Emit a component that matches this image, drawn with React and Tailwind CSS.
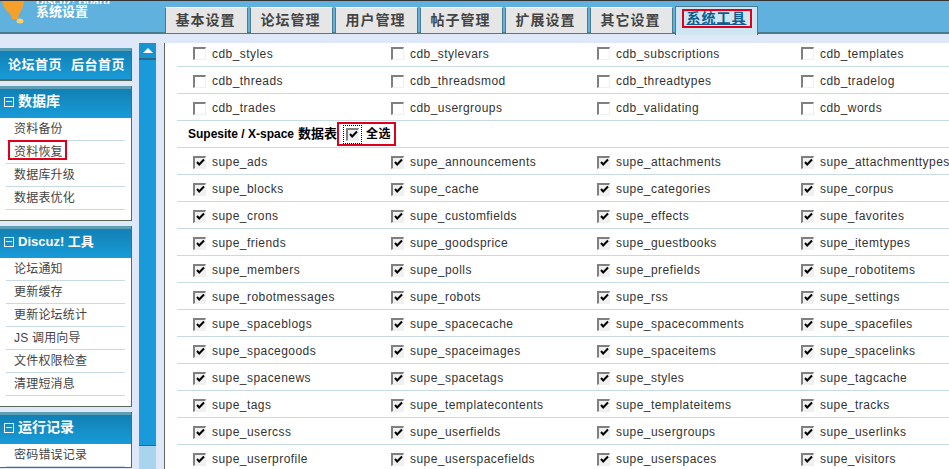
const font = { fontFamily: '"Liberation Sans","Noto Sans CJK SC",sans-serif' }

const TABS = ['基本设置', '论坛管理', '用户管理', '帖子管理', '扩展设置', '其它设置']

const CDB_ROWS = [
  ['cdb_styles', 'cdb_stylevars', 'cdb_subscriptions', 'cdb_templates'],
  ['cdb_threads', 'cdb_threadsmod', 'cdb_threadtypes', 'cdb_tradelog'],
  ['cdb_trades', 'cdb_usergroups', 'cdb_validating', 'cdb_words'],
]

const SUPE_ROWS = [
  ['supe_ads', 'supe_announcements', 'supe_attachments', 'supe_attachmenttypes'],
  ['supe_blocks', 'supe_cache', 'supe_categories', 'supe_corpus'],
  ['supe_crons', 'supe_customfields', 'supe_effects', 'supe_favorites'],
  ['supe_friends', 'supe_goodsprice', 'supe_guestbooks', 'supe_itemtypes'],
  ['supe_members', 'supe_polls', 'supe_prefields', 'supe_robotitems'],
  ['supe_robotmessages', 'supe_robots', 'supe_rss', 'supe_settings'],
  ['supe_spaceblogs', 'supe_spacecache', 'supe_spacecomments', 'supe_spacefiles'],
  ['supe_spacegoods', 'supe_spaceimages', 'supe_spaceitems', 'supe_spacelinks'],
  ['supe_spacenews', 'supe_spacetags', 'supe_styles', 'supe_tagcache'],
  ['supe_tags', 'supe_templatecontents', 'supe_templateitems', 'supe_tracks'],
  ['supe_usercss', 'supe_userfields', 'supe_usergroups', 'supe_userlinks'],
  ['supe_userprofile', 'supe_userspacefields', 'supe_userspaces', 'supe_visitors'],
]

function Check({ checked }) {
  return (
    <span className={`w-[13px] h-[13px] shrink-0 border-t-2 border-l-2 border-t-[#808080] border-l-[#808080] border-r border-b border-r-[#f0f0f0] border-b-[#f0f0f0] flex items-center justify-center ${checked ? 'bg-[#f0f0f0]' : 'bg-white'}`}>
      {checked && (
        <svg width="9" height="9" viewBox="0 0 9 9">
          <path d="M1 4 L3.2 6.5 L8 1.5" fill="none" stroke="#000" strokeWidth="2" />
        </svg>
      )}
    </span>
  )
}

function Row({ items, checked, first }) {
  return (
    <div className={`border-b border-[#c8dae4] flex items-center shrink-0 text-[12px] tracking-[0.45px] text-[#333] ${first ? 'h-[24px] pb-[2px]' : 'h-[27px] pt-[2px]'}`}>
      {items.map((name, i) => (
        <div key={name} className={`flex items-center shrink-0 gap-[6px] ${['w-[214px] pl-[16px]', 'w-[206px]', 'w-[204px]', ''][i]}`}>
          <Check checked={checked} />
          <span>{name}</span>
        </div>
      ))}
    </div>
  )
}

function SideItem({ label, boxed }) {
  return (
    <div className="h-[23px] mx-[6px] border-b border-[#c8dae4] flex items-center text-[12px] text-[#444] shrink-0 relative">
      <span className="pl-[8px] tracking-[0.2px]">{label}</span>
      {boxed && <span className="absolute left-[2px] top-[-1px] w-[59px] h-[20px] border-2 border-[#e0001b]" />}
    </div>
  )
}

function SideBlock({ title, titleClass, children }) {
  return (
    <div className="w-[132px] border-r border-b border-[#5a6a5a] bg-white shrink-0">
      <div className={`h-[32px] pb-[4px] bg-gradient-to-b from-[#1280b4] to-[#189bd8] border-t-[3px] border-[#5d9fb5] flex items-center pl-[4px] gap-[4px] text-white font-bold ${titleClass}`}>
        <span className="w-[10px] h-[10px] border border-white flex items-center justify-center shrink-0">
          <span className="w-[6px] h-px bg-white" />
        </span>
        {title}
      </div>
      {children}
    </div>
  )
}

export default function App() {
  return (
    <div className="w-[949px] h-[469px] overflow-hidden bg-[#dfe8f8] flex flex-col" style={font}>
      {/* top bar */}
      <div className="h-[34px] shrink-0 bg-[#60b1de] border-t border-[#333] border-b-2 border-b-[#4a7c8e] flex">
        <div className="w-[165px] shrink-0 flex overflow-hidden">
          <svg width="28" height="24" viewBox="0 0 28 24" className="shrink-0">
            <path d="M2 0 L24 0 Q23 7 21 10 Q18 14 18 18 L12 18 Q11 13 7 10 Q3 6 2 0Z" fill="#f5a02a" />
            <ellipse cx="20" cy="20" rx="3.5" ry="2.5" fill="#f7d070" />
          </svg>
          <div className="pl-[8px] text-white font-bold">
            <div className="h-[3px] overflow-hidden flex items-end text-[11px] leading-[5px]">Discuz! Board</div>
            <div className="text-[13px] leading-[16px]">系统设置</div>
          </div>
        </div>
        <div className="flex items-end gap-[2px] h-[32px]">
          {TABS.map((tab) => (
            <div key={tab} className="w-[83px] h-[26px] pr-[2px] bg-[#e6e6e6] border-t border-l border-r border-t-white border-l-[#4a7c8e] border-r-[#4a7c8e] flex items-center justify-center text-[14px] font-bold text-[#444] tracking-[1px]">
              {tab}
            </div>
          ))}
          <div className="w-[83px] h-[29px] bg-[#cde6f2] border border-b-0 border-[#4a7c8e] flex items-start justify-center pt-[2px] mb-[-2px]">
            <span className="border-2 border-[#e0001b] px-[3px] text-[14px] font-bold text-[#0f5d8c] underline tracking-[1px] leading-[15px]">系统工具</span>
          </div>
        </div>
      </div>

      <div className="flex-1 flex min-h-0">
        {/* sidebar */}
        <div className="w-[139px] shrink-0 pt-[14px] flex flex-col overflow-hidden">
          <div className="w-[132px] h-[33px] pb-[1px] pl-[2px] shrink-0 bg-gradient-to-b from-[#1280b4] to-[#189bd8] border-t-[3px] border-t-[#5d9fb5] border-r border-b-2 border-[#5a6a5a] flex items-center justify-center text-white font-bold text-[13px] tracking-[0.5px] gap-[9px]">
            <span>论坛首页</span>
            <span>后台首页</span>
          </div>
          <div className="h-[5px] shrink-0" />
          <SideBlock title="数据库" titleClass="text-[14px]">
            <SideItem label="资料备份" />
            <SideItem label="资料恢复" boxed />
            <SideItem label="数据库升级" />
            <SideItem label="数据表优化" />
            <div className="h-[10px]" />
          </SideBlock>
          <div className="h-[5px] shrink-0" />
          <SideBlock title="Discuz! 工具" titleClass="text-[13px]">
            <SideItem label="论坛通知" />
            <SideItem label="更新缓存" />
            <SideItem label="更新论坛统计" />
            <SideItem label="JS 调用向导" />
            <SideItem label="文件权限检查" />
            <SideItem label="清理短消息" />
            <div className="h-[10px]" />
          </SideBlock>
          <div className="h-[5px] shrink-0" />
          <SideBlock title="运行记录" titleClass="text-[14px]">
            <SideItem label="密码错误记录" />
          </SideBlock>
        </div>

        {/* scroll strip */}
        <div className="w-[17px] shrink-0 mt-[9px] flex flex-col bg-[#a8d4ee]">
          <div className="h-[17px] bg-[#1a94d0] border-b-2 border-[#2a6a86] flex items-center justify-center shrink-0">
            <span className="w-0 h-0 border-l-[5px] border-r-[5px] border-b-[5px] border-l-transparent border-r-transparent border-b-white" />
          </div>
          <div className="h-[386px] bg-[#1a9ada] border-b border-[#2a6a86] shrink-0" />
        </div>

        {/* main table */}
        <div className="flex-1 ml-[8px] mt-[9px] bg-white border-l border-[#5a6a5a] pl-[12px] overflow-hidden flex flex-col">
          {CDB_ROWS.map((r, i) => <Row key={r[0]} items={r} first={i === 0} />)}
          <div className="h-[27px] border-b border-[#c8dae4] flex items-center shrink-0 pl-[11px] text-[12px] font-bold text-black">
            <span>Supesite / X-space</span>
            <span className="ml-[4px] text-[13px]">数据表</span>
            <span className="w-[59px] h-[24px] border-2 border-[#e0001b] flex items-center pl-[2px] gap-[4px] text-[12px] tracking-[0.5px]">
              <span className="border border-dotted border-black p-[2px] ml-[2px]">
                <Check checked />
              </span>
              全选
            </span>
          </div>
          {SUPE_ROWS.map((r) => <Row key={r[0]} items={r} checked />)}
        </div>
      </div>
    </div>
  )
}
